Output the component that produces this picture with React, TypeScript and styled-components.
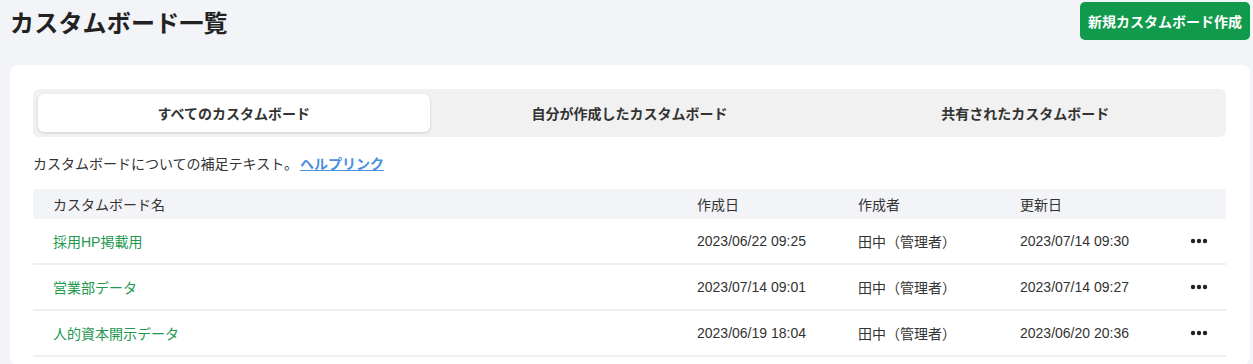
import React, { useState } from 'react';
import styled, { createGlobalStyle } from 'styled-components';

const GlobalStyle = createGlobalStyle`
  html, body {
    margin: 0;
    padding: 0;
    background: #f3f4f8;
    font-family: 'Liberation Sans', 'Noto Sans CJK JP', sans-serif;
    color: #222;
  }
`;

const Page = styled.div`
  padding: 2px 3px 0 10px;
  width: 1253px;
  box-sizing: border-box;
`;

const Header = styled.div`
  display: flex;
  align-items: center;
  justify-content: space-between;
  height: 38px;
  margin-bottom: 25px;
`;

const Title = styled.h1`
  margin: 0;
  font-size: 24px;
  font-weight: 700;
  color: #222;
  letter-spacing: 0.2px;
`;

const PrimaryButton = styled.button`
  height: 38px;
  padding: 0 8px;
  border: none;
  border-radius: 5px;
  background: #129a4c;
  color: #fff;
  font-family: inherit;
  font-size: 14px;
  font-weight: 700;
  cursor: pointer;
`;

const Card = styled.div`
  background: #fff;
  border-radius: 8px;
  padding: 24px 24px 8px 23px;
`;

const TabList = styled.div`
  display: grid;
  grid-template-columns: repeat(3, 1fr);
  padding: 5px;
  background: #f1f1f1;
  border-radius: 6px;
  gap: 4px;
`;

const Tab = styled.button<{ $active?: boolean }>`
  height: 38px;
  border: none;
  border-radius: 6px;
  background: ${(p) => (p.$active ? '#fff' : 'transparent')};
  box-shadow: ${(p) => (p.$active ? '0 1px 3px rgba(0,0,0,0.15)' : 'none')};
  font-family: inherit;
  font-size: 14px;
  font-weight: 700;
  color: #333;
  cursor: pointer;
`;

const HelpText = styled.p`
  margin: 17px 0 15px;
  font-size: 14px;
  color: #333;
  line-height: 20px;
`;

const HelpLink = styled.a`
  color: #4a8fe0;
  font-weight: 700;
  text-decoration: underline;
  margin-left: 2px;
`;

const Table = styled.div`
  display: flex;
  flex-direction: column;
`;

const Row = styled.div<{ $head?: boolean }>`
  display: grid;
  grid-template-columns: 644px 161px 162px 160px 1fr;
  align-items: center;
  height: ${(p) => (p.$head ? '30px' : '44px')};
  padding-left: 20px;
  background: ${(p) => (p.$head ? '#f3f4f8' : '#fff')};
  border-bottom: ${(p) => (p.$head ? 'none' : '2px solid #efefef')};
  font-size: 14px;
  color: #333;
`;

const NameLink = styled.a`
  color: #23994f;
  text-decoration: none;
`;

const MoreButton = styled.button`
  border: none;
  background: none;
  padding: 0;
  margin-left: 10px;
  width: 20px;
  display: flex;
  align-items: center;
  cursor: pointer;
`;

const MoreIcon = () => (
  <svg width="18" height="6" viewBox="0 0 18 6">
    <circle cx="3" cy="3" r="2.2" fill="#222" />
    <circle cx="9" cy="3" r="2.2" fill="#222" />
    <circle cx="15" cy="3" r="2.2" fill="#222" />
  </svg>
);

const tabs = ['すべてのカスタムボード', '自分が作成したカスタムボード', '共有されたカスタムボード'];

const boards = [
  { name: '採用HP掲載用', created: '2023/06/22 09:25', author: '田中（管理者）', updated: '2023/07/14 09:30' },
  { name: '営業部データ', created: '2023/07/14 09:01', author: '田中（管理者）', updated: '2023/07/14 09:27' },
  { name: '人的資本開示データ', created: '2023/06/19 18:04', author: '田中（管理者）', updated: '2023/06/20 20:36' },
];

export default function App() {
  const [active, setActive] = useState(0);
  return (
    <>
      <GlobalStyle />
      <Page>
        <Header>
          <Title>カスタムボード一覧</Title>
          <PrimaryButton>新規カスタムボード作成</PrimaryButton>
        </Header>
        <Card>
          <TabList>
            {tabs.map((t, i) => (
              <Tab key={t} $active={i === active} onClick={() => setActive(i)}>
                {t}
              </Tab>
            ))}
          </TabList>
          <HelpText>
            カスタムボードについての補足テキスト。<HelpLink href="#">ヘルプリンク</HelpLink>
          </HelpText>
          <Table>
            <Row $head>
              <span>カスタムボード名</span>
              <span>作成日</span>
              <span>作成者</span>
              <span>更新日</span>
              <span />
            </Row>
            {boards.map((b) => (
              <Row key={b.name}>
                <NameLink href="#">{b.name}</NameLink>
                <span>{b.created}</span>
                <span>{b.author}</span>
                <span>{b.updated}</span>
                <MoreButton aria-label="more">
                  <MoreIcon />
                </MoreButton>
              </Row>
            ))}
          </Table>
        </Card>
      </Page>
    </>
  );
}
